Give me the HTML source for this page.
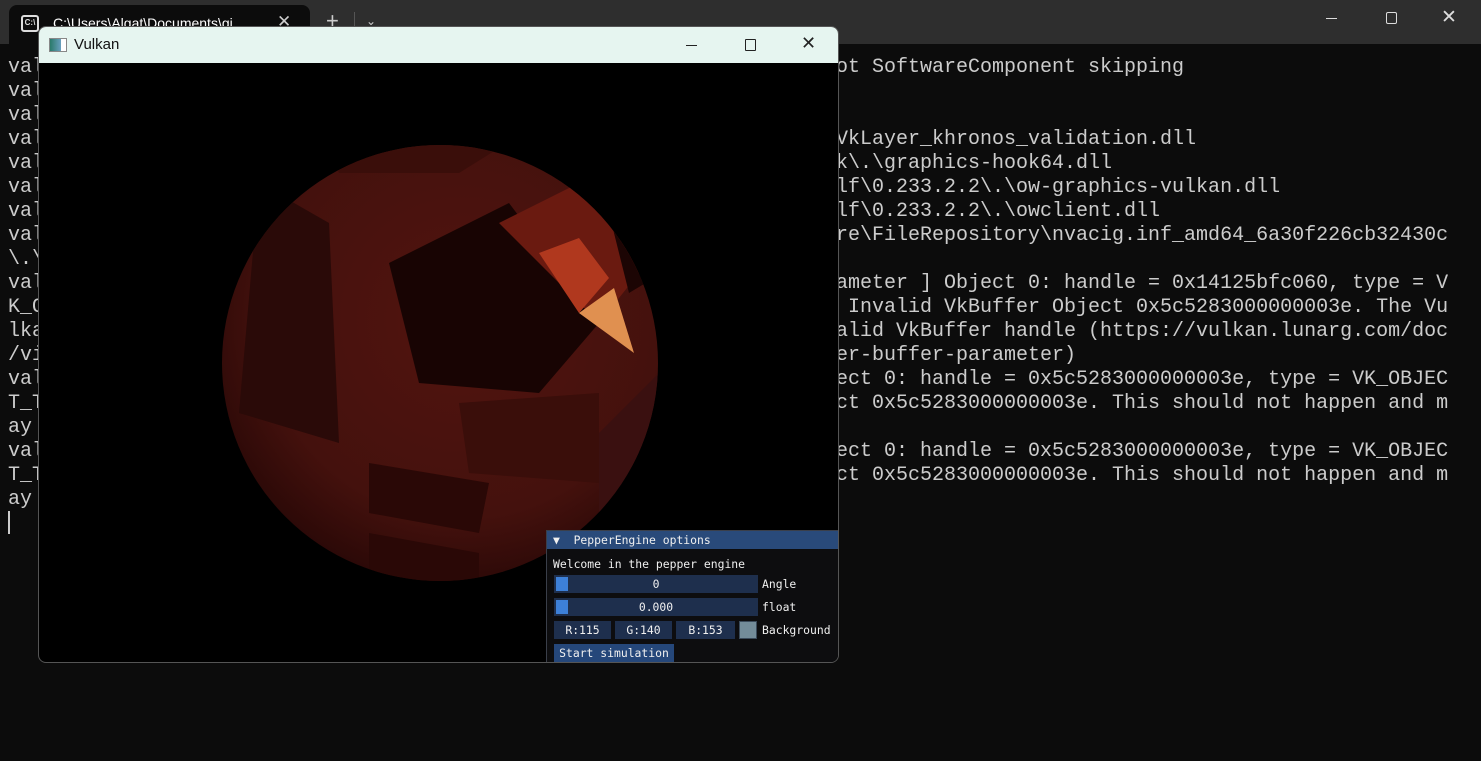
<!DOCTYPE html>
<html><head><meta charset="utf-8"><style>
*{margin:0;padding:0;box-sizing:border-box}
body{width:1481px;height:761px;overflow:hidden;background:#0c0c0c;position:relative;font-family:"Liberation Sans",sans-serif}
.tabbar{position:absolute;left:0;top:0;width:1481px;height:44px;background:#2e2e2e}
.tab{position:absolute;left:9px;top:5px;width:301px;height:39px;background:#0c0c0c;border-radius:8px 8px 0 0}
.term{position:absolute;left:8px;top:56px;font-family:"Liberation Mono",monospace;font-size:20px;line-height:24px;color:#cccccc;white-space:pre}
.r{position:absolute;left:836px;font-family:"Liberation Mono",monospace;font-size:20px;line-height:24px;color:#cccccc;white-space:pre;margin-top:2px}
.win{position:absolute;left:38px;top:26px;width:801px;height:637px;background:#000;border:1px solid #555;border-radius:8px;overflow:hidden}
.title{height:36px;background:#e6f5f0;position:relative}
.ig{position:absolute;left:507px;top:503px;width:294px;height:134px;background:#0d0d0f;border:1px solid #3a3f4a;font-family:"DejaVu Sans Mono","Liberation Mono",monospace;font-size:11.4px;color:#f0f0f0}
.ig .hd{height:18px;background:#294a7a;line-height:18px;padding-left:6px}
.fld{position:absolute;height:18px;background:#1e2f4d;text-align:center;line-height:18px}
.lbl{position:absolute;line-height:18px}
</style></head><body>
<div class="tabbar">
 <div class="tab">
  <div style="position:absolute;left:12px;top:10px;width:18px;height:17px;border:2px solid #ddd;border-radius:3px;font-size:8px;color:#ddd;line-height:12px;text-align:center;font-weight:bold">C:\</div>
  <div style="position:absolute;left:44px;top:10px;color:#fff;font-size:14px">C:\Users\Algat\Documents\gi</div>
  <div style="position:absolute;left:268px;top:7px;color:#ccc;font-size:17px">✕</div>
 </div>
 <div style="position:absolute;left:326px;top:8px;color:#ccc;font-size:22px">+</div>
 <div style="position:absolute;left:354px;top:12px;width:1px;height:22px;background:#555"></div>
 <div style="position:absolute;left:366px;top:14px;color:#ccc;font-size:12px">⌄</div>
 <div style="position:absolute;left:1326px;top:18px;width:11px;height:1px;background:#ddd"></div>
 <div style="position:absolute;left:1386px;top:12px;width:11px;height:12px;border:1px solid #ddd;border-radius:2px"></div>
 <div style="position:absolute;left:1441px;top:6px;color:#ddd;font-size:19px">✕</div>
</div>
<div class="term">val
val
val
val
val
val
val
val
\.\
val
K_O
lka
/vi
val
T_T
ay
val
T_T
ay</div>
<div style="position:absolute;left:8px;top:511px;width:2px;height:23px;background:#ccc"></div>
<div class="r" style="top:54px">ot SoftwareComponent skipping</div>
<div class="r" style="top:126px">VkLayer_khronos_validation.dll</div>
<div class="r" style="top:150px">k\.\graphics-hook64.dll</div>
<div class="r" style="top:174px">lf\0.233.2.2\.\ow-graphics-vulkan.dll</div>
<div class="r" style="top:198px">lf\0.233.2.2\.\owclient.dll</div>
<div class="r" style="top:222px">re\FileRepository\nvacig.inf_amd64_6a30f226cb32430c</div>
<div class="r" style="top:270px">ameter ] Object 0: handle = 0x14125bfc060, type = V</div>
<div class="r" style="top:294px"> Invalid VkBuffer Object 0x5c5283000000003e. The Vu</div>
<div class="r" style="top:318px">alid VkBuffer handle (https://vulkan.lunarg.com/doc</div>
<div class="r" style="top:342px">er-buffer-parameter)</div>
<div class="r" style="top:366px">ect 0: handle = 0x5c5283000000003e, type = VK_OBJEC</div>
<div class="r" style="top:390px">ct 0x5c5283000000003e. This should not happen and m</div>
<div class="r" style="top:438px">ect 0: handle = 0x5c5283000000003e, type = VK_OBJEC</div>
<div class="r" style="top:462px">ct 0x5c5283000000003e. This should not happen and m</div>

<div class="win">
 <div class="title">
  <div style="position:absolute;left:10px;top:11px;width:18px;height:14px;border:1px solid #888;background:linear-gradient(90deg,#2a7a6a,#6aa0c0 70%,#fff 70%)"></div>
  <div style="position:absolute;left:35px;top:9px;font-size:15px;color:#111">Vulkan</div>
  <div style="position:absolute;left:647px;top:18px;width:11px;height:1px;background:#222"></div>
  <div style="position:absolute;left:706px;top:12px;width:11px;height:12px;border:1px solid #222;border-radius:1px"></div>
  <div style="position:absolute;left:762px;top:6px;font-size:18px;color:#222">✕</div>
 </div>
 <svg style="position:absolute;left:0;top:36px" width="801" height="601">
  <defs>
   <radialGradient id="g" cx="0.55" cy="0.4" r="0.65"><stop offset="0" stop-color="#52140f"/><stop offset="0.7" stop-color="#44110d"/><stop offset="1" stop-color="#260706"/></radialGradient>
   <clipPath id="c"><circle cx="401" cy="300" r="218"/></clipPath>
  </defs>
  <circle cx="401" cy="300" r="218" fill="url(#g)"/>
  <g clip-path="url(#c)">
   <path d="M220 120 L290 160 L300 380 L200 350 Z" fill="#2a0a08"/>
   <path d="M350 200 L470 140 L560 260 L500 330 L380 320 Z" fill="#180403"/>
   <path d="M420 340 L560 330 L560 420 L430 410 Z" fill="#3a0e0a"/>
   <path d="M330 400 L450 420 L440 470 L330 450 Z" fill="#2a0806"/>
   <path d="M330 470 L440 490 L440 530 L330 520 Z" fill="#2a0806"/>
   <path d="M460 160 L560 110 L600 210 L560 260 Z" fill="#6a1a10"/>
   <path d="M500 190 L540 175 L570 215 L540 250 Z" fill="#b0381e"/>
   <path d="M540 250 L575 225 L595 290 Z" fill="#e09050"/>
   <path d="M540 30 L640 40 L640 200 L590 230 Z" fill="#1c0504"/>
   <path d="M280 60 L400 40 L500 60 L420 110 L300 110 Z" fill="#3a0e0a"/>
   <path d="M560 370 L620 310 L630 420 L560 460 Z" fill="#3a1010"/>
  </g>
 </svg>
 <div class="ig">
  <div class="hd">▼&nbsp;&nbsp;PepperEngine options</div>
  <div class="lbl" style="left:6px;top:24px">Welcome in the pepper engine</div>
  <div class="fld" style="left:7px;top:44px;width:204px">0</div>
  <div style="position:absolute;left:9px;top:46px;width:12px;height:14px;background:#3d80d8"></div>
  <div class="lbl" style="left:215px;top:44px">Angle</div>
  <div class="fld" style="left:7px;top:67px;width:204px">0.000</div>
  <div style="position:absolute;left:9px;top:69px;width:12px;height:14px;background:#3d80d8"></div>
  <div class="lbl" style="left:215px;top:67px">float</div>
  <div class="fld" style="left:7px;top:90px;width:57px">R:115</div>
  <div class="fld" style="left:68px;top:90px;width:57px">G:140</div>
  <div class="fld" style="left:129px;top:90px;width:59px">B:153</div>
  <div style="position:absolute;left:192px;top:90px;width:18px;height:18px;background:#738c99;border:1px solid #3a4a5a"></div>
  <div class="lbl" style="left:215px;top:90px">Background</div>
  <div class="fld" style="left:7px;top:113px;width:120px;background:#25477a">Start simulation</div>
 </div>
</div>
</body></html>
